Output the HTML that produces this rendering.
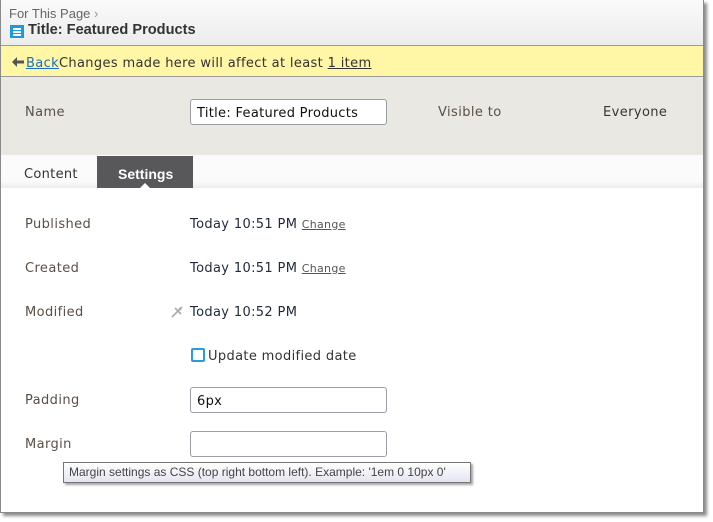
<!DOCTYPE html>
<html><head><style>
*{margin:0;padding:0;box-sizing:border-box}
body{width:713px;height:522px;background:#fff;position:relative;overflow:hidden;font-family:"DejaVu Sans","Liberation Sans",sans-serif;}
.frame{position:absolute;left:0;top:0;width:704px;height:513px;border:1px solid #8a8a8a;border-top:none;background:#fff;box-shadow:3px 3px 3px rgba(0,0,0,.45)}
.in{position:absolute;left:-1px;top:0;width:704px;height:512px}
.abs{position:absolute;white-space:nowrap}
.hdr{position:absolute;left:1px;top:0;width:702px;height:45px;background:linear-gradient(#fafafa,#ececec)}
.yb{position:absolute;left:1px;top:45px;width:702px;height:32px;background:#fff6a6;border-top:1px solid #9a9a9a;border-bottom:1px solid #9a9a9a}
.gb{position:absolute;left:1px;top:77px;width:702px;height:78px;background:#e9e8e2}
.tabs{position:absolute;left:1px;top:155px;width:702px;height:33px;background:linear-gradient(#fbfbfb 80%,#ececec)}
.lbl{font-size:13px;color:#5a5045;letter-spacing:.4px}
.val{font-size:13px;color:#1e2a3a;letter-spacing:.35px}
.inp{position:absolute;left:190px;width:197px;height:26px;border:1px solid #9a9ea6;border-radius:3px;background:#fff;font-size:13px;color:#111;padding:6px 6px 5px;white-space:nowrap;letter-spacing:.3px}
.chg{font-size:11px;color:#555;text-decoration:underline;letter-spacing:.3px}
</style></head><body>
<div class="frame"><div class="in">
<div class="hdr"></div>
<div class="abs" style="left:9px;top:6px;font-family:'Liberation Sans',sans-serif;font-size:13px;color:#666">For This Page <span style="color:#999">&#x203A;</span></div>
<div class="abs" style="left:10px;top:25px;width:14px;height:13px;background:#1a9ae0;">
 <div style="position:absolute;left:3px;top:3px;width:8px;height:1.5px;background:#fff"></div>
 <div style="position:absolute;left:3px;top:6px;width:8px;height:1.5px;background:#fff"></div>
 <div style="position:absolute;left:3px;top:9px;width:8px;height:1.5px;background:#fff"></div>
</div>
<div class="abs" style="left:28px;top:22px;font-family:'Liberation Sans',sans-serif;font-weight:bold;font-size:14.6px;color:#333">Title: Featured Products</div>
<div class="yb"></div>
<svg class="abs" style="left:12px;top:57px" width="12" height="10" viewBox="0 0 12 10"><path d="M5 0L0 5L5 10V6.5H12V3.5H5Z" fill="#555"/></svg>
<div class="abs" style="left:26px;top:56px;font-size:13px;color:#333;letter-spacing:.35px"><span style="color:#1a6fc4;text-decoration:underline">Back</span>Changes made here will affect at least <span style="text-decoration:underline">1 item</span></div>
<div class="gb"></div>
<div class="abs lbl" style="left:25px;top:105px">Name</div>
<div class="inp" style="top:99px">Title: Featured Products</div>
<div class="abs lbl" style="left:438px;top:105px">Visible to</div>
<div class="abs lbl" style="left:603px;top:105px;color:#3a3530">Everyone</div>
<div class="tabs"></div>
<div class="abs" style="left:24px;top:167px;font-size:13px;color:#333;letter-spacing:.3px">Content</div>
<div class="abs" style="left:97px;top:156px;width:96px;height:32px;background:#58585a"></div>
<div class="abs" style="left:118px;top:166px;color:#fff;font-weight:bold;font-family:'Liberation Sans',sans-serif;font-size:14px">Settings</div>
<div class="abs" style="left:140px;top:183px;width:0;height:0;border-left:5px solid transparent;border-right:5px solid transparent;border-bottom:5px solid #fff"></div>
<div class="abs lbl" style="left:25px;top:217px">Published</div>
<div class="abs val" style="left:190px;top:217px">Today 10:51 PM <span class="chg">Change</span></div>
<div class="abs lbl" style="left:25px;top:261px">Created</div>
<div class="abs val" style="left:190px;top:261px">Today 10:51 PM <span class="chg">Change</span></div>
<div class="abs lbl" style="left:25px;top:305px">Modified</div>
<svg class="abs" style="left:170px;top:305px" width="14" height="14" viewBox="0 0 14 14"><path d="M2 12L8 6M5 3l6 6M9 3l2 2M12 2L8 6" stroke="#aaa" stroke-width="1.6" fill="none"/></svg>
<div class="abs val" style="left:190px;top:305px">Today 10:52 PM</div>
<div class="abs" style="left:191px;top:348px;width:14px;height:14px;border:2px solid #2a9be3;border-radius:2px;background:#fff"></div>
<div class="abs val" style="left:208px;top:349px;color:#333">Update modified date</div>
<div class="abs lbl" style="left:25px;top:393px">Padding</div>
<div class="inp" style="top:387px">6px</div>
<div class="abs lbl" style="left:25px;top:437px">Margin</div>
<div class="inp" style="top:431px"></div>
<div class="abs" style="left:63px;top:462px;width:408px;height:21px;border:1px solid #767676;background:linear-gradient(#fff,#e4e5f0);box-shadow:2px 2px 2px rgba(0,0,0,.35);font-family:'Liberation Sans',sans-serif;font-size:12px;color:#444;padding:2px 5px">Margin settings as CSS (top right bottom left). Example: '1em 0 10px 0'</div>
</div></div>
</body></html>
